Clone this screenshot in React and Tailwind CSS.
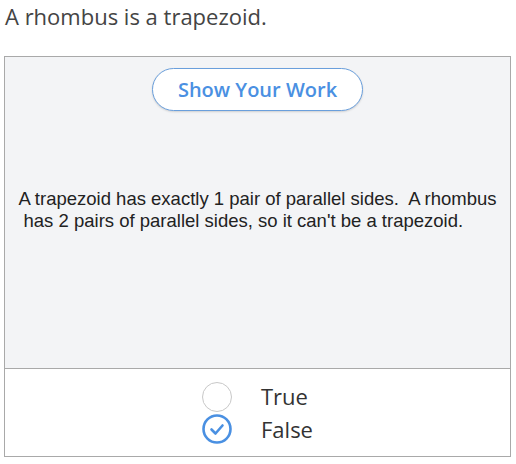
export default function App() {
  return (
    <div className="w-[516px] h-[464px] bg-white" style={{ fontFamily: '"Open Sans", sans-serif' }}>
      <div className="pl-[5px] pt-[1px] h-[56px] text-[22px] leading-[30px] text-[#444]">
        A rhombus is a trapezoid.
      </div>
      <div className="ml-[4px] w-[507px] border border-[#a9a9a9]">
        <div className="h-[311px] bg-[#f3f4f6] flex flex-col items-center pt-[11px]">
          <button className="w-[211px] h-[43px] rounded-full bg-white border border-[#6a9fdc] shadow-[0_1px_2px_rgba(0,0,0,0.15)] text-[#4a90e2] text-[20px] font-semibold">
            Show Your Work
          </button>
          <div
            className="mt-[77px] text-left text-[18.5px] leading-[21.5px] text-[#222] whitespace-pre"
            style={{ fontFamily: '"Liberation Sans", Arial, sans-serif' }}
          >
            {"A trapezoid has exactly 1 pair of parallel sides.  A rhombus\n has 2 pairs of parallel sides, so it can't be a trapezoid."}
          </div>
        </div>
        <div className="h-[88px] border-t border-[#a9a9a9] bg-white flex justify-center pt-[11px]">
          <div className="flex flex-col">
            <div className="flex items-center h-[33px]">
              <div className="w-[30px] h-[30px] rounded-full border border-[#c8c8c8] bg-white" />
              <span className="ml-[29px] text-[22px] text-[#333]">True</span>
            </div>
            <div className="flex items-center h-[32px]">
              <svg width="30" height="30" viewBox="0 0 30 30">
                <circle cx="15" cy="15" r="13.5" fill="white" stroke="#4a90e2" strokeWidth="2.6" />
                <path d="M9.5 15.5 L13.5 19.5 L20.5 11.5" fill="none" stroke="#4a90e2" strokeWidth="2.6" strokeLinecap="round" strokeLinejoin="round" />
              </svg>
              <span className="ml-[29px] text-[22px] text-[#333]">False</span>
            </div>
          </div>
        </div>
      </div>
    </div>
  );
}
